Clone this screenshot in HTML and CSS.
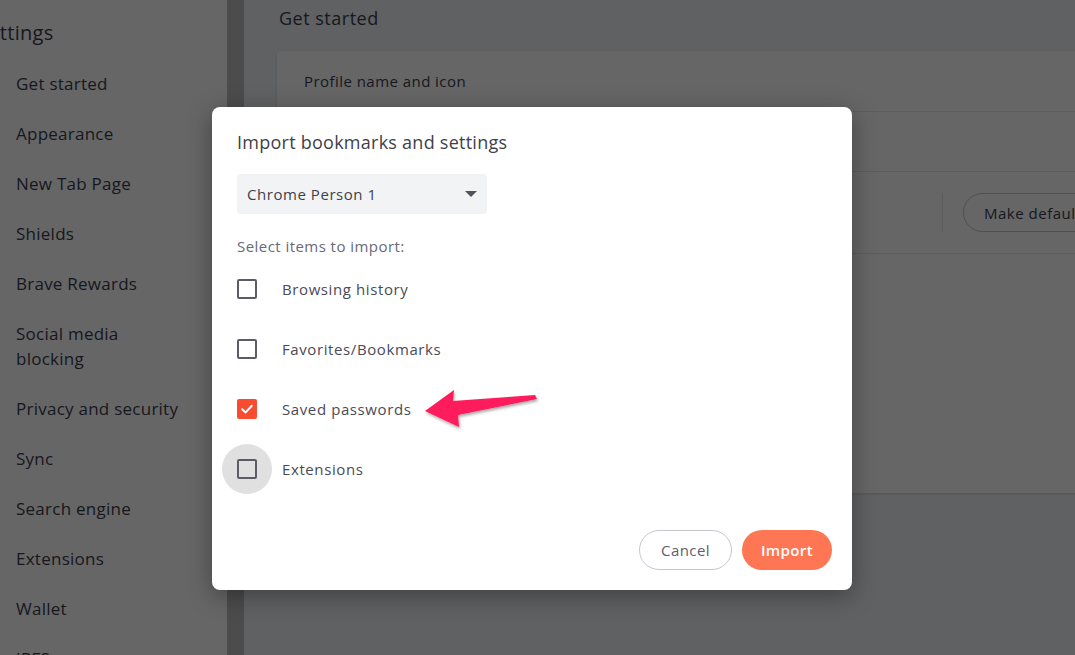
FILE: index.html
```html
<!DOCTYPE html>
<html lang="en">
<head>
<meta charset="utf-8">
<title>Settings</title>
<link rel="stylesheet" href="styles.css">
</head>
<body>
<div class="page">
  <nav class="sidebar">
    <h1 class="side-title">Settings</h1>
    <ul class="side-menu">
      <li>Get started</li>
      <li>Appearance</li>
      <li>New Tab Page</li>
      <li>Shields</li>
      <li>Brave Rewards</li>
      <li>Social media blocking</li>
      <li>Privacy and security</li>
      <li>Sync</li>
      <li>Search engine</li>
      <li>Extensions</li>
      <li>Wallet</li>
      <li>IPFS</li>
    </ul>
  </nav>
  <div class="scroll-strip"></div>
  <main class="main">
    <h2 class="main-title">Get started</h2>
    <section class="card">
      <div class="card-row row-a">Profile name and icon</div>
      <div class="card-row row-a"></div>
      <div class="card-row row-b">
        <span class="vdiv"></span>
        <button class="btn-outline">Make default</button>
      </div>
      <div class="card-row row-c"></div>
    </section>
  </main>
</div>

<div class="overlay">
  <div class="dialog">
    <h3 class="dialog-title">Import bookmarks and settings</h3>
    <div class="select">
      <span>Chrome Person 1</span>
      <span class="caret"></span>
    </div>
    <p class="hint">Select items to import:</p>
    <ul class="checks">
      <li class="check-row"><span class="box"></span><span class="label">Browsing history</span></li>
      <li class="check-row"><span class="box"></span><span class="label">Favorites/Bookmarks</span></li>
      <li class="check-row"><span class="box checked"><svg viewBox="0 0 20 20" width="20" height="20"><path d="M5.2 10.2 L8.6 13.4 L14.8 6.8" fill="none" stroke="#fff" stroke-width="2" stroke-linecap="round" stroke-linejoin="round"/></svg></span><span class="label">Saved passwords</span></li>
      <li class="check-row"><span class="box focused"></span><span class="label">Extensions</span></li>
    </ul>
    <div class="actions">
      <button class="btn-cancel">Cancel</button>
      <button class="btn-import">Import</button>
    </div>
  </div>
</div>

<svg class="arrow" width="130" height="50" viewBox="0 0 130 50">
  <defs>
    <filter id="sh" x="-20%" y="-40%" width="140%" height="180%">
      <feDropShadow dx="1" dy="2" stdDeviation="1.5" flood-color="#000" flood-opacity="0.35"/>
    </filter>
  </defs>
  <path d="M3 30 L32 9 L31 20 L113 14 L115 18 L36 34 L37 46 Z" fill="#fe1a5c" filter="url(#sh)"/>
</svg>
</body>
</html>
```

FILE: styles.css
```css
* { box-sizing: border-box; }

html, body {
  margin: 0;
  padding: 0;
  width: 1075px;
  height: 655px;
  overflow: hidden;
}

body {
  font-family: "Open Sans", "Liberation Sans", sans-serif;
  color: #3b3e4f;
  position: relative;
}

.page {
  display: flex;
  height: 655px;
  background: #f1f3f6;
}

/* Sidebar */
.sidebar {
  width: 227px;
  flex: 0 0 227px;
  background: #ffffff;
  overflow: hidden;
}

.side-title {
  margin: 19px 0 11px -23px;
  font-size: 20px;
  font-weight: 400;
  line-height: 28px;
  letter-spacing: 0.3px;
  color: #3b3e4f;
}

.side-menu {
  list-style: none;
  margin: 0;
  padding: 0;
}

.side-menu li {
  padding: 12.5px 16px;
  font-size: 17px;
  line-height: 25px;
  letter-spacing: 0.25px;
  color: #3b3e4f;
  width: 200px;
}

.scroll-strip {
  width: 17px;
  flex: 0 0 17px;
  background: #bdbdbd;
}

/* Main */
.main {
  flex: 1;
  padding: 0 0 0 33px;
  overflow: hidden;
}

.main-title {
  margin: 6px 0 0 2px;
  font-size: 18px;
  font-weight: 400;
  line-height: 24px;
  letter-spacing: 0.5px;
  color: #3b3e4f;
}

.card {
  margin-top: 21px;
  width: 867px;
  background: #ffffff;
  border-radius: 4px;
  box-shadow: 0 1px 3px rgba(0,0,0,0.15);
}

.card-row {
  display: flex;
  align-items: center;
  padding: 0 26px 0 27px;
  border-top: 1px solid #e6e8ee;
  font-size: 15px;
  letter-spacing: 0.45px;
  color: #3b3e4f;
}

.card-row:first-child { border-top: none; }

.row-a { height: 60px; }
.row-b { height: 82px; }
.row-c { height: 240px; }

.vdiv {
  width: 1px;
  height: 39px;
  background: #e2e4ea;
  margin-left: auto;
  margin-right: 20px;
}

.btn-outline {
  height: 39px;
  width: 155px;
  border: 1px solid #c2c4cf;
  border-radius: 20px;
  background: #fff;
  font-family: inherit;
  font-size: 15px;
  letter-spacing: 0.5px;
  white-space: nowrap;
  color: #3b3e4f;
  text-align: left;
  padding: 0 20px;
}

/* Overlay + dialog */
.overlay {
  position: absolute;
  inset: 0;
  background: rgba(0,0,0,0.6);
  padding: 107px 0 0 212px;
}

.dialog {
  width: 640px;
  background: #ffffff;
  border-radius: 8px;
  padding: 23px 20px 20px 25px;
  box-shadow: 0 6px 24px rgba(0,0,0,0.35);
}

.dialog-title {
  margin: 0;
  font-size: 18px;
  font-weight: 400;
  line-height: 24px;
  letter-spacing: 0.25px;
  color: #3e3f49;
}

.select {
  margin-top: 20px;
  width: 250px;
  height: 40px;
  background: #f1f3f5;
  border-radius: 4px;
  display: flex;
  align-items: center;
  justify-content: space-between;
  padding: 0 9px 0 10px;
  font-size: 15px;
  letter-spacing: 0.55px;
  color: #3e3f49;
}

.caret {
  width: 0;
  height: 0;
  border-left: 6.5px solid transparent;
  border-right: 6.5px solid transparent;
  border-top: 6px solid #50525c;
  margin-right: 1px;
}

.hint {
  margin: 22px 0 0;
  font-size: 15px;
  line-height: 20px;
  letter-spacing: 0.45px;
  color: #686978;
}

.checks {
  list-style: none;
  margin: 3px 0 0;
  padding: 0;
}

.check-row {
  position: relative;
  z-index: 0;
  height: 60px;
  display: flex;
  align-items: center;
  gap: 25px;
}

.box {
  position: relative;
  width: 20px;
  height: 20px;
  border: 2px solid #5a5c66;
  border-radius: 2px;
  flex: 0 0 20px;
}

.box.checked {
  border: none;
  background: #f84b30;
}

.box.checked svg { display: block; }

.box.focused::before {
  content: "";
  position: absolute;
  left: -17px;
  top: -17px;
  width: 50px;
  height: 50px;
  border-radius: 50%;
  background: #e0e0e0;
  z-index: -1;
}

.label {
  font-size: 15px;
  letter-spacing: 0.6px;
  color: #4a4b57;
}

.actions {
  margin-top: 31px;
  display: flex;
  justify-content: flex-end;
  gap: 10px;
}

.btn-cancel, .btn-import {
  height: 40px;
  border-radius: 20px;
  font-family: inherit;
  font-size: 15px;
  letter-spacing: 0.4px;
  padding: 0;
}

.btn-cancel {
  width: 93px;
  border: 1px solid #c5c7d0;
  background: #fff;
  color: #5d5e6b;
}

.btn-import {
  width: 90px;
  border: none;
  background: #fe7654;
  color: #ffffff;
  font-weight: 600;
}

/* Annotation arrow */
.arrow {
  position: absolute;
  left: 422px;
  top: 381px;
}
```
